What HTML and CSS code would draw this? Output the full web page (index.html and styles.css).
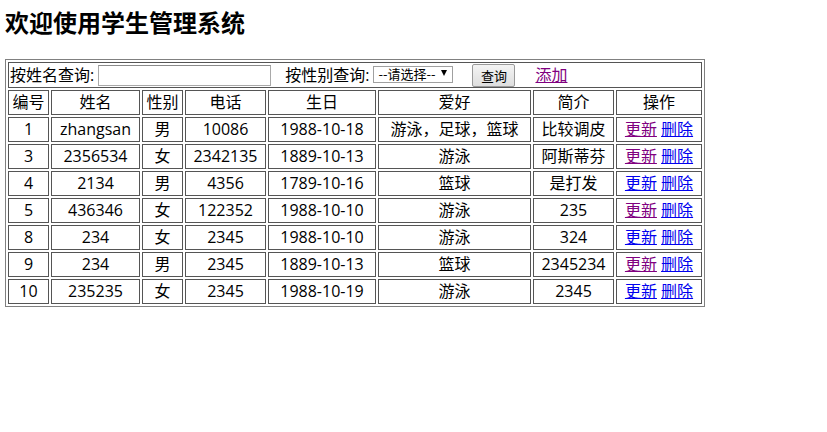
FILE: index.html
```html
<!DOCTYPE html>
<html lang="zh-CN">
<head>
<meta charset="utf-8">
<title>学生管理系统</title>
<link rel="stylesheet" href="styles.css">
</head>
<body>
<div class="page">
  <h1 class="title">欢迎使用学生管理系统</h1>
  <table class="grid">
    <tr>
      <td class="search-cell" colspan="8">
        <form class="search">
          <label class="lbl">按姓名查询:</label>
          <input class="name-input" type="text">
          <label class="lbl lbl-sex">按性别查询:</label>
          <span class="sel-wrap"><select class="sel"><option>--请选择--</option><option>男</option><option>女</option></select></span>
          <button class="btn" type="button">查询</button>
          <a class="add visited" href="#">添加</a>
        </form>
      </td>
    </tr>
    <tr>
      <th class="c-id">编号</th>
      <th class="c-name">姓名</th>
      <th class="c-sex">性别</th>
      <th class="c-tel">电话</th>
      <th class="c-bday">生日</th>
      <th class="c-hobby">爱好</th>
      <th class="c-intro">简介</th>
      <th class="c-op">操作</th>
    </tr>
    <tr><td>1</td><td>zhangsan</td><td>男</td><td>10086</td><td>1988-10-18</td><td>游泳，足球，篮球</td><td>比较调皮</td><td><a class="visited" href="#">更新</a> <a href="#">删除</a></td></tr>
    <tr><td>3</td><td>2356534</td><td>女</td><td>2342135</td><td>1889-10-13</td><td>游泳</td><td>阿斯蒂芬</td><td><a class="visited" href="#">更新</a> <a href="#">删除</a></td></tr>
    <tr><td>4</td><td>2134</td><td>男</td><td>4356</td><td>1789-10-16</td><td>篮球</td><td>是打发</td><td><a href="#">更新</a> <a href="#">删除</a></td></tr>
    <tr><td>5</td><td>436346</td><td>女</td><td>122352</td><td>1988-10-10</td><td>游泳</td><td>235</td><td><a class="visited" href="#">更新</a> <a href="#">删除</a></td></tr>
    <tr><td>8</td><td>234</td><td>女</td><td>2345</td><td>1988-10-10</td><td>游泳</td><td>324</td><td><a href="#">更新</a> <a href="#">删除</a></td></tr>
    <tr><td>9</td><td>234</td><td>男</td><td>2345</td><td>1889-10-13</td><td>篮球</td><td>2345234</td><td><a class="visited" href="#">更新</a> <a href="#">删除</a></td></tr>
    <tr><td>10</td><td>235235</td><td>女</td><td>2345</td><td>1988-10-19</td><td>游泳</td><td>2345</td><td><a href="#">更新</a> <a href="#">删除</a></td></tr>
  </table>
</div>
</body>
</html>
```
FILE: styles.css
```css
html, body {
  margin: 0;
  padding: 0;
  background: #fff;
}
body {
  font-family: "Open Sans", "Noto Sans CJK SC", sans-serif;
  font-size: 16px;
  color: #000;
}
.page {
  padding: 0 5px;
}
.title {
  font-family: "Noto Sans CJK SC", sans-serif;
  font-size: 24px;
  font-weight: bold;
  line-height: 28px;
  margin: 8px 0 23px;
}
.grid {
  width: 700px;
  border: 1px solid #808080;
  border-collapse: separate;
  border-spacing: 2px;
}
.grid th,
.grid td {
  box-sizing: border-box;
  border: 1px solid #555;
  padding: 1px;
  line-height: 21px;
  font-weight: normal;
  text-align: center;
  white-space: nowrap;
}
.c-id { width: 41px; }
.c-name { width: 89px; }
.c-sex { width: 41px; }
.c-tel { width: 81px; }
.c-bday { width: 108px; }
.c-hobby { width: 153px; }
.c-intro { width: 81px; }
.c-op { width: 86px; }

.grid td.search-cell {
  text-align: left;
  padding: 0 1px;
}
.search {
  display: flex;
  align-items: center;
  height: 24px;
  margin: 0;
}
.lbl {
  line-height: 21px;
}
.name-input {
  box-sizing: border-box;
  width: 173px;
  height: 21px;
  margin: 1px 0 0 4px;
  padding: 0 2px;
  border: 1px solid #a9a9a9;
  border-top-color: #8a8a8a;
  font: 13px "Open Sans", "Noto Sans CJK SC", sans-serif;
}
.lbl-sex {
  margin-left: 14px;
}
.sel-wrap {
  position: relative;
  display: inline-block;
  margin: -1px 0 0 4px;
  width: 80px;
  height: 17px;
}
.sel {
  -webkit-appearance: none;
  appearance: none;
  box-sizing: border-box;
  display: block;
  width: 80px;
  height: 17px;
  margin: 0;
  padding: 0 0 1px 4px;
  border: 1px solid #a0a0a0;
  border-radius: 0;
  background: #fff;
  color: #000;
  font: 13px/14px "Noto Sans CJK SC", sans-serif;
}
.sel-wrap::after {
  content: "";
  position: absolute;
  right: 6px;
  top: 4px;
  width: 0;
  height: 0;
  border-left: 3px solid transparent;
  border-right: 3px solid transparent;
  border-top: 6px solid #000;
  pointer-events: none;
}
.btn {
  box-sizing: border-box;
  width: 43px;
  height: 23px;
  margin: 0 0 0 19px;
  padding: 0;
  border: 1px solid #9a9a9a;
  border-radius: 2px;
  background: linear-gradient(#f4f4f4, #dedede);
  color: #000;
  font: 13px/21px "Noto Sans CJK SC", sans-serif;
}
.add {
  margin-left: 20px;
  line-height: 21px;
}
a {
  color: #0000ee;
  text-decoration: underline;
}
a.visited {
  color: #800080;
}
```
